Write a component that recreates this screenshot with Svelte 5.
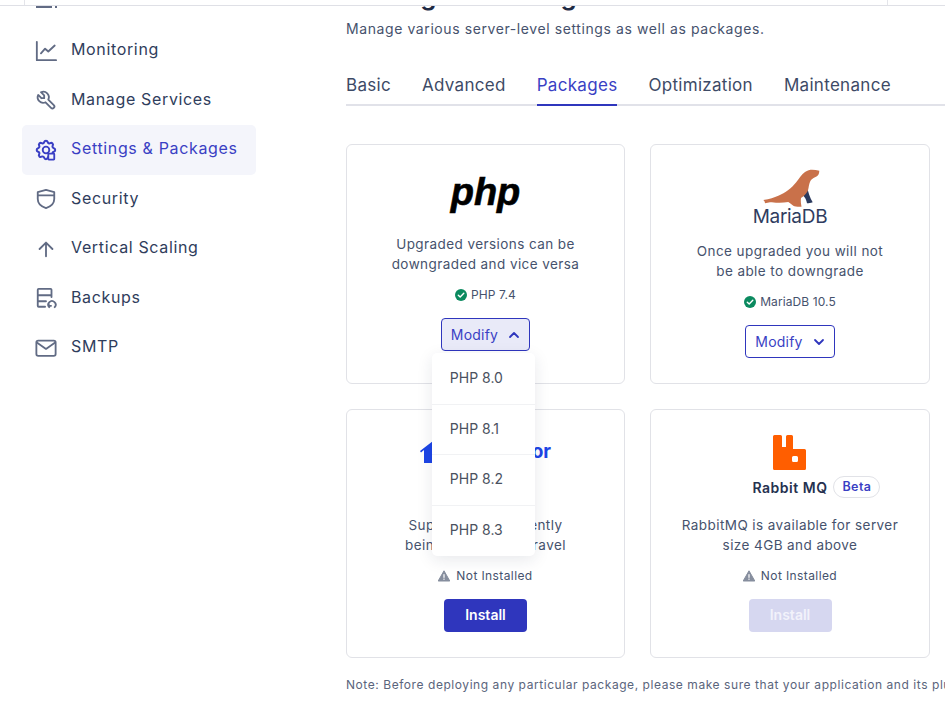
<script lang="ts">
	const navItems = [
		{ label: 'Monitoring', icon: 'chart' },
		{ label: 'Manage Services', icon: 'wrench' },
		{ label: 'Settings & Packages', icon: 'gear', active: true },
		{ label: 'Security', icon: 'shield' },
		{ label: 'Vertical Scaling', icon: 'up' },
		{ label: 'Backups', icon: 'backup' },
		{ label: 'SMTP', icon: 'mail' }
	];
	const tabs = ['Basic', 'Advanced', 'Packages', 'Optimization', 'Maintenance'];
	const phpVersions = ['PHP 8.0', 'PHP 8.1', 'PHP 8.2', 'PHP 8.3'];
</script>

{#snippet okIcon()}
	<svg class="status-icon" viewBox="0 0 12 12" aria-hidden="true">
		<circle cx="6" cy="6" r="6" fill="#0b8a5f" />
		<path d="M3.300 6.200 5.200 8 8.800 4.300" fill="none" stroke="#fff" stroke-width="1.400" stroke-linecap="round" stroke-linejoin="round" />
	</svg>
{/snippet}

{#snippet warnIcon()}
	<svg class="status-icon" viewBox="0 0 12 12" aria-hidden="true">
		<path d="M6 .8 11.800 11H.2z" fill="#868e9e" stroke="#868e9e" stroke-linejoin="round" />
		<rect x="5.400" y="4.200" width="1.200" height="3.600" fill="#fff" />
		<rect x="5.400" y="8.600" width="1.200" height="1.200" fill="#fff" />
	</svg>
{/snippet}

<div class="page">
	<div class="topbar">
		<span class="topbar-cell"></span>
	</div>

	<div class="content">
		<aside class="sidebar">
			<div class="nav-clipped">
				<span class="clipped-bar"></span>
				<span class="clipped-dot"></span>
			</div>
			{#each navItems as item}
				<div class="nav-item" class:active={item.active}>
					<svg class="nav-icon" viewBox="0 0 24 24" aria-hidden="true">
						{#if item.icon === 'chart'}
							<path d="M2 2v20h21M6.500 14.500l4.500-5 3.500 3 7-6.500" />
						{:else if item.icon === 'wrench'}
							<path d="M7 10h3V7L6.500 3.500a6 6 0 0 1 8 8l6 6a2 2 0 0 1-3 3l-6-6a6 6 0 0 1-8-8L7 10" />
						{:else if item.icon === 'gear'}
							<path d="M10.325 4.317c.426-1.756 2.924-1.756 3.350 0a1.724 1.724 0 0 0 2.573 1.066c1.543-.94 3.310.826 2.370 2.370a1.724 1.724 0 0 0 1.065 2.572c1.756.426 1.756 2.924 0 3.350a1.724 1.724 0 0 0-1.066 2.573c.94 1.543-.826 3.310-2.370 2.370a1.724 1.724 0 0 0-2.572 1.065c-.426 1.756-2.924 1.756-3.350 0a1.724 1.724 0 0 0-2.573-1.066c-1.543.94-3.310-.826-2.370-2.370a1.724 1.724 0 0 0-1.065-2.572c-1.756-.426-1.756-2.924 0-3.350a1.724 1.724 0 0 0 1.066-2.573c-.94-1.543.826-3.310 2.370-2.370 1 .608 2.296.07 2.572-1.065z" transform="translate(-1.500 -1.500) scale(1.120)" />
							<circle cx="12" cy="12" r="3.600" />
							<rect class="gear-box" x="14.500" y="16" width="6.500" height="6.500" rx=".6" />
						{:else if item.icon === 'shield'}
							<path d="M12 2 3 4.500V12c0 5 4 8.300 9 10 5-1.700 9-5 9-10V4.500zM3 8h18" />
						{:else if item.icon === 'up'}
							<path d="M12 20V5M5 12l7-7 7 7" />
						{:else if item.icon === 'backup'}
							<path d="M11 21.500H4a1 1 0 0 1-1-1V3a1 1 0 0 1 1-1h13a1 1 0 0 1 1 1v8M3 9h15M3 15.500h9" />
							<path d="M15.500 22a4 4 0 1 1 6 0M15 17.500v3h2.500" />
						{:else}
							<rect x="1.500" y="4" width="21" height="16.500" rx="2" />
							<path d="M2 6l10 7 10-7" />
						{/if}
					</svg>
					<span>{item.label}</span>
				</div>
			{/each}
		</aside>

		<main class="main">
			<h1>Settings &amp; Packages</h1>
			<p class="subtitle">Manage various server-level settings as well as packages.</p>

			<nav class="tabs">
				{#each tabs as tab}
					<span class="tab" class:selected={tab === 'Packages'}>{tab}</span>
				{/each}
			</nav>

			<div class="grid">
				<section class="card">
					<div class="logo">
						<span class="php-logo">php</span>
					</div>
					<p class="desc">Upgraded versions can be<br />downgraded and vice versa</p>
					<div class="status">{@render okIcon()}PHP 7.4</div>
					<div class="menu-anchor">
						<button class="modify open" type="button">
							Modify
							<svg viewBox="0 0 12 12" aria-hidden="true"><path d="M2 8l4-4 4 4" /></svg>
						</button>
						<ul class="menu">
							{#each phpVersions as version}
								<li>{version}</li>
							{/each}
						</ul>
					</div>
				</section>

				<section class="card">
					<div class="logo maria">
						<svg class="seal" viewBox="0 0 62 42" aria-hidden="true">
							<path d="M47 18C48 24 50 30 52.700 34.300 50.500 35 49 35.300 47 35.300 46.500 32 45 29 43 27.500z" fill="#2b3a5e" />
							<path d="M3.300 32C10 31 14 29.500 18.300 27.700 22 26 25 24.500 28.300 22 31.500 19.500 33.500 17.500 36 14.500 39.500 10.500 41 6.500 45 4 47.500 2.300 50 1.800 52 1.800 54.500 1.800 57 2.200 59.300 2.700 59.300 5 58.500 7.500 56.500 8.500 54.500 9.500 52.500 10.500 51 12 49.500 14 49 17 48.500 20 48 24 45 27.500 41 30 40.500 33 41 36 41.500 38.700 38 39 35 38.500 33.300 37.700 31.500 36.500 30 35.200 28.300 34 25 34.600 21.500 34.900 18.300 34.800 15 34.700 12.500 34.300 10 34.300 8.500 34.500 6.500 35.200 5 35.300 5 34 4.500 33 3.300 32z" fill="#c9714a" />
						</svg>
						<span class="maria-text">MariaDB</span>
					</div>
					<p class="desc">Once upgraded you will not<br />be able to downgrade</p>
					<div class="status">{@render okIcon()}MariaDB 10.5</div>
					<button class="modify" type="button">
						Modify
						<svg viewBox="0 0 12 12" aria-hidden="true"><path d="M2 4l4 4 4-4" /></svg>
					</button>
				</section>

				<section class="card">
					<div class="logo super">
						<svg class="house" viewBox="0 0 26 22" aria-hidden="true">
							<path d="M13 0 0 10l1 1.500 3-2.500v13h18V9l3 2.500 1-1.500z" fill="#1d45e6" />
						</svg>
						<span class="super-text">Supervisor</span>
					</div>
					<p class="desc">Supervisor is currently<br />being used with Laravel</p>
					<div class="status warn">{@render warnIcon()}Not Installed</div>
					<button class="install" type="button">Install</button>
				</section>

				<section class="card">
					<div class="logo rabbit">
						<svg class="rabbit-icon" viewBox="0 0 33 35" aria-hidden="true">
							<path fill-rule="evenodd" d="M0 1.500A1.500 1.500 0 0 1 1.500 0h6A1.500 1.500 0 0 1 9 1.500V12h4V1.500A1.500 1.500 0 0 1 14.500 0h4A1.500 1.500 0 0 1 20 1.500V14h11.500A1.500 1.500 0 0 1 33 15.500v18a1.500 1.500 0 0 1-1.500 1.500h-30A1.500 1.500 0 0 1 0 33.500zM20.500 21a1.500 1.500 0 0 0-1.500 1.500v3a1.500 1.500 0 0 0 1.500 1.500h3a1.500 1.500 0 0 0 1.500-1.500v-3a1.500 1.500 0 0 0-1.500-1.500z" fill="#ff5e00" />
						</svg>
						<div class="rabbit-name">
							<strong>Rabbit MQ</strong>
							<span class="beta">Beta</span>
						</div>
					</div>
					<p class="desc">RabbitMQ is available for server<br />size 4GB and above</p>
					<div class="status warn">{@render warnIcon()}Not Installed</div>
					<button class="install" type="button" disabled>Install</button>
				</section>
			</div>

			<p class="note">Note: Before deploying any particular package, please make sure that your application and its plugins are compatible.</p>
		</main>
	</div>
</div>

<style>
	:global(body) {
		margin: 0;
		background: #fff;
	}

	.page {
		width: 945px;
		height: 719px;
		overflow: hidden;
		font-family: Inter, "Noto Sans", sans-serif;
		color: #3d4a66;
	}

	.topbar {
		height: 5px;
		border-bottom: 1px solid #dfe0e6;
		display: flex;
		padding: 0 57px 0 24px;
	}

	.topbar-cell {
		flex: 1;
		border-left: 1px solid #e4e5ea;
		border-right: 1px solid #e4e5ea;
	}

	.content {
		display: flex;
		height: 713px;
		overflow: hidden;
	}

	.sidebar {
		width: 234px;
		margin-left: 22px;
		margin-right: 90px;
		flex: none;
		display: flex;
		flex-direction: column;
	}

	.nav-clipped {
		height: 20.500px;
		flex: none;
		box-sizing: border-box;
		padding-left: 14px;
		display: flex;
		align-items: flex-start;
		gap: 3px;
	}

	.clipped-bar {
		width: 16px;
		height: 2px;
		background: #616b84;
	}

	.clipped-dot {
		width: 2px;
		height: 2px;
		background: #616b84;
	}

	.nav-item {
		height: 49.500px;
		flex: none;
		padding-left: 13px;
		padding-bottom: 4px;
		display: flex;
		align-items: center;
		gap: 14px;
		font-size: 16px;
		letter-spacing: .65px;
		color: #2f3d5c;
		border-radius: 5px;
		box-sizing: border-box;
	}

	.nav-item.active {
		background: #f4f5fb;
		box-shadow: 0 -1px 0 #f4f5fb;
		color: #3a3fc4;
	}

	.nav-icon {
		width: 22px;
		height: 22px;
		margin-top: 3px;
		flex: none;
		fill: none;
		stroke: #616b84;
		stroke-width: 2;
		stroke-linecap: round;
		stroke-linejoin: round;
	}

	.active .nav-icon {
		stroke: #3a3fc4;
	}

	.gear-box {
		fill: #f4f5fb;
	}

	.main {
		width: 640px;
		flex: none;
	}

	h1 {
		margin: -29px 0 0;
		font-size: 26px;
		line-height: 38px;
		font-weight: 600;
		letter-spacing: .3px;
		color: #1f2a44;
	}

	.subtitle {
		margin: 3px 0 0;
		font-size: 14px;
		line-height: 21px;
		letter-spacing: .59px;
		color: #46526d;
	}

	.tabs {
		margin-top: 33px;
		display: flex;
		gap: 31px;
		width: 600px;
		border-bottom: 2px solid #e1e2e9;
	}

	.tab {
		font-size: 17px;
		line-height: 26px;
		letter-spacing: .3px;
		padding-bottom: 6px;
		margin-bottom: -2px;
		color: #3d4a66;
	}

	.tab.selected {
		color: #3a3fc4;
		border-bottom: 2px solid #2f36bd;
	}

	.grid {
		margin-top: 38px;
		display: grid;
		grid-template-columns: 279px 280px;
		grid-template-rows: 240px 249px;
		gap: 25px;
	}

	.card {
		box-sizing: border-box;
		border: 1px solid #e1e2e7;
		border-radius: 6px;
		display: flex;
		flex-direction: column;
		align-items: center;
		padding-top: 24px;
	}

	.logo {
		height: 65px;
		display: flex;
		flex-direction: column;
		align-items: center;
		justify-content: flex-start;
	}

	.php-logo {
		margin-top: 4px;
		font-family: "Liberation Sans", sans-serif;
		font-style: italic;
		font-weight: 700;
		font-size: 38px;
		line-height: 38px;
		-webkit-text-stroke: .6px #000;
		color: #000;
	}

	.maria {
		height: 72px;
	}

	.seal {
		width: 62px;
		height: 42px;
		margin-top: -1px;
		margin-left: 2px;
	}

	.maria-text {
		margin-top: -3px;
		font-size: 19px;
		line-height: 20px;
		color: #2f3d60;
		letter-spacing: -.3px;
	}

	.super {
		flex-direction: row;
		padding-top: 7px;
		gap: 3px;
		height: 74px;
		align-items: flex-start;
	}

	.house {
		width: 26px;
		height: 22px;
	}

	.super-text {
		font-size: 19px;
		line-height: 22px;
		font-weight: 700;
		color: #1d45e6;
	}

	.rabbit {
		height: 81px;
	}

	.rabbit-icon {
		width: 33px;
		height: 35px;
		margin-top: 1px;
	}

	.rabbit-name {
		position: relative;
		margin-top: 7px;
		line-height: 20px;
	}

	.rabbit-name strong {
		font-size: 14px;
		font-weight: 600;
		letter-spacing: .5px;
		color: #25314f;
	}

	.beta {
		position: absolute;
		left: calc(100% + 6px);
		top: -1px;
		font-size: 12.500px;
		line-height: 20px;
		padding: 0 8px;
		letter-spacing: .4px;
		color: #3a3fc4;
		border: 1px solid #e1e2e7;
		border-radius: 11px;
		font-weight: 600;
	}

	.desc {
		margin: 0;
		font-size: 13.500px;
		line-height: 20px;
		letter-spacing: .42px;
		text-align: center;
		color: #46526d;
	}

	.status {
		margin-top: 12px;
		display: flex;
		align-items: center;
		gap: 4px;
		font-size: 12px;
		line-height: 18px;
		letter-spacing: .1px;
		color: #46526d;
	}

	.status.warn {
		gap: 6px;
		letter-spacing: .4px;
	}

	.status-icon {
		width: 12px;
		height: 12px;
	}

	.menu-anchor {
		position: relative;
		display: flex;
		flex-direction: column;
		align-items: center;
	}

	.modify {
		margin-top: 14px;
		height: 33px;
		padding: 0 9px;
		display: flex;
		align-items: center;
		gap: 10px;
		font: inherit;
		font-size: 14px;
		letter-spacing: .2px;
		color: #3a3fc4;
		background: #fff;
		border: 1px solid #2f36bd;
		border-radius: 4px;
	}

	.modify.open {
		background: #e9eaf8;
	}

	.modify svg {
		width: 12px;
		height: 12px;
		fill: none;
		stroke: #2f36bd;
		stroke-width: 1.800;
		stroke-linecap: round;
		stroke-linejoin: round;
	}

	.menu {
		position: absolute;
		top: 49px;
		left: -9px;
		z-index: 2;
		width: 103px;
		margin: 0;
		padding: 0;
		list-style: none;
		background: #fff;
		border-radius: 5px;
		box-shadow: 0 4px 16px rgba(30, 40, 70, .1);
	}

	.menu li {
		height: 50.500px;
		box-sizing: border-box;
		padding: 0 18px 2px;
		display: flex;
		align-items: center;
		font-size: 14px;
		color: #4a5160;
		border-bottom: 1px solid #f1f2f4;
	}

	.menu li:first-child {
		height: 51.500px;
	}

	.menu li:last-child {
		border-bottom: 0;
	}

	.install {
		margin-top: 14px;
		width: 83px;
		height: 33px;
		padding: 0 0 2px;
		font: inherit;
		font-size: 14px;
		font-weight: 600;
		color: #fff;
		background: #2f36bd;
		border: 0;
		border-radius: 4px;
	}

	.install:disabled {
		background: #d6d7f0;
		color: #f2f2fb;
	}

	.note {
		margin: 18px 0 0;
		font-size: 12px;
		line-height: 18px;
		letter-spacing: .56px;
		white-space: nowrap;
		color: #5a647c;
	}
</style>
